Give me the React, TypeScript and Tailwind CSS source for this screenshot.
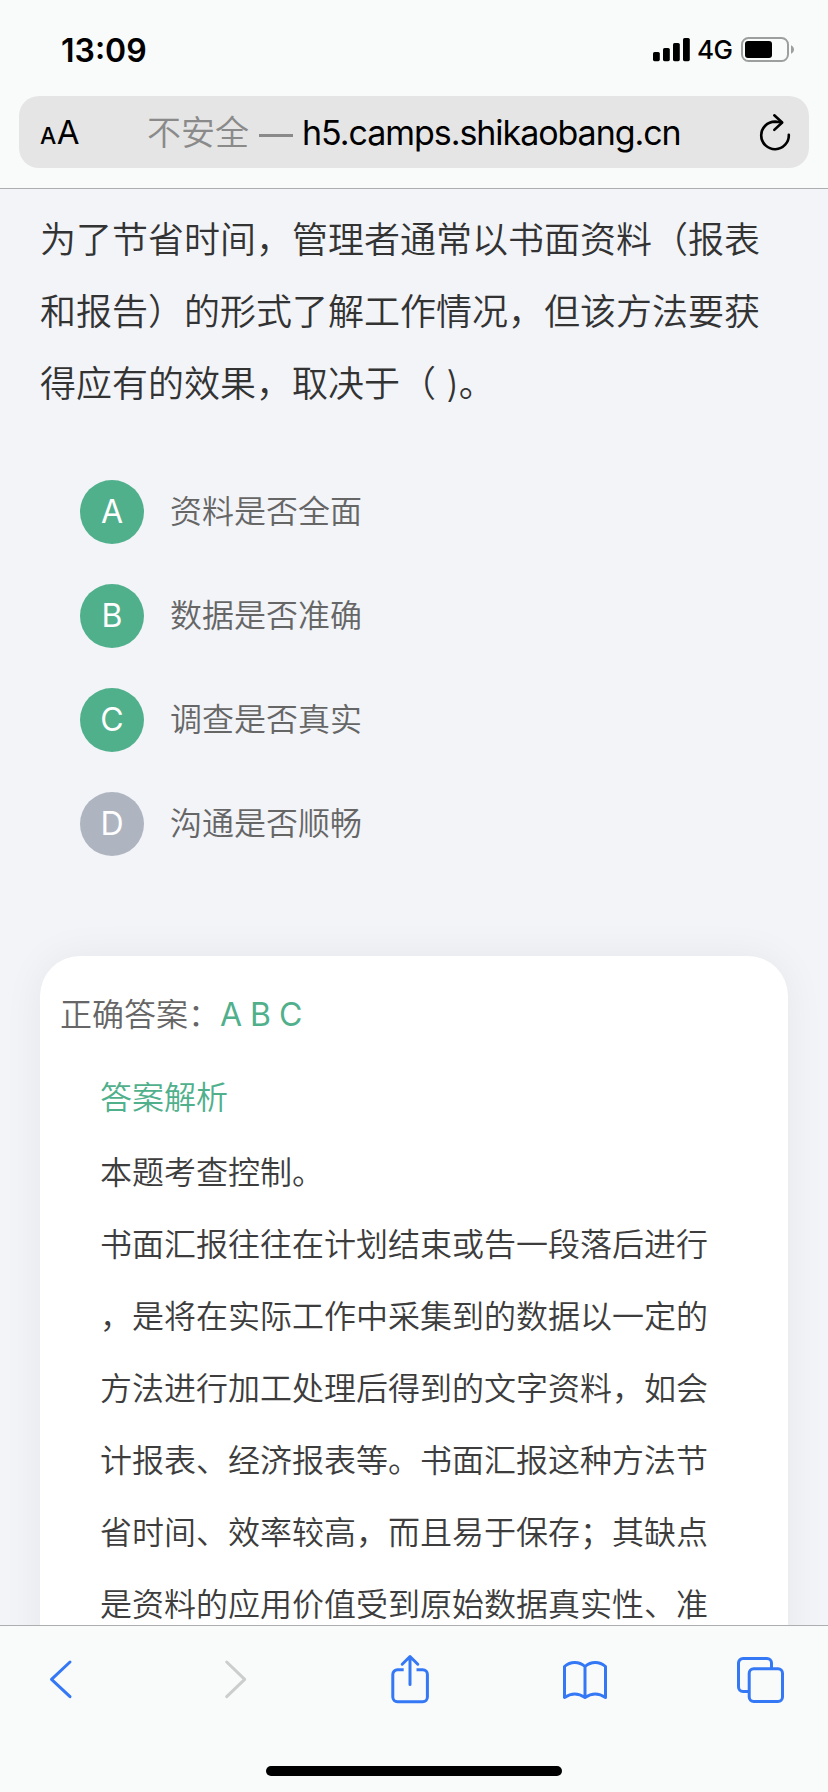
import React from 'react';

interface Option {
  key: string;
  label: string;
  correct: boolean;
}

const questionLines = [
  '为了节省时间，管理者通常以书面资料（报表',
  '和报告）的形式了解工作情况，但该方法要获',
  '得应有的效果，取决于（ )。',
];

const options: Option[] = [
  { key: 'A', label: '资料是否全面', correct: true },
  { key: 'B', label: '数据是否准确', correct: true },
  { key: 'C', label: '调查是否真实', correct: true },
  { key: 'D', label: '沟通是否顺畅', correct: false },
];

const analysisLines = [
  '本题考查控制。',
  '书面汇报往往在计划结束或告一段落后进行',
  '，是将在实际工作中采集到的数据以一定的',
  '方法进行加工处理后得到的文字资料，如会',
  '计报表、经济报表等。书面汇报这种方法节',
  '省时间、效率较高，而且易于保存；其缺点',
  '是资料的应用价值受到原始数据真实性、准',
];

const StatusBar: React.FC = () => (
  <div className="flex h-24 items-start justify-between pl-[61px] pr-[34px] pt-[37px] text-black">
    <span className="text-[32px] font-semibold leading-[27px]">13:09</span>
    <div className="flex items-center">
      <svg width="37" height="25" viewBox="0 0 37 25">
        <rect x="0" y="15" width="6.8" height="9.2" rx="1.6" />
        <rect x="10" y="11" width="6.8" height="13.2" rx="1.6" />
        <rect x="20" y="6" width="6.8" height="18.2" rx="1.6" />
        <rect x="30" y="1" width="6.8" height="23.2" rx="1.6" />
      </svg>
      <span className="ml-[7px] w-[44px] text-[26px] font-[450] leading-[25px] tracking-[-0.5px]">4G</span>
      <svg width="53" height="25" viewBox="0 0 53 25">
        <rect x="1" y="1" width="46" height="23" rx="6.5" fill="none" stroke="#9d9f9e" strokeWidth="2" />
        <rect x="4" y="4" width="27" height="17" rx="3" />
        <path d="M50 8.2c1.9.8 3 2.4 3 4.3s-1.1 3.5-3 4.3z" fill="#9d9f9e" />
      </svg>
    </div>
  </div>
);

const AddressBar: React.FC = () => (
  <div className="mx-[19px] flex h-[72px] items-center rounded-[20px] bg-[#e5e5e5] pl-[21px] pr-[17px] text-black">
    <div className="mt-1 flex w-[107px] items-baseline leading-[76px]">
      <span className="text-[23px] font-medium tracking-[-0.5px]">A</span>
      <span className="ml-px text-[33px]">A</span>
    </div>
    <div className="flex-1 whitespace-pre text-[34px] leading-[75px]">
      <span className="font-[350] text-[#8a8a8a]">不安全</span>
      <span className="ml-[10px] inline-block h-[3px] w-[34px] bg-[#8a8a8a] align-[8px]" />
      <span className="ml-[9px] tracking-[-1.05px]">h5.camps.shikaobang.cn</span>
    </div>
    <svg width="36" height="40" viewBox="0 0 36 40" fill="none" stroke="black" strokeWidth="2.6" strokeLinecap="round" strokeLinejoin="round">
      <path d="M32.8 22.7A13.8 13.8 0 1 1 19 9.6l6.5.7" />
      <path d="M18.3 3.3l7.9 7.2-7.9 7.4" />
    </svg>
  </div>
);

const Toolbar: React.FC = () => (
  <footer className="h-[167px] shrink-0 border-t border-[#acaeaf] bg-[#f9fbfa]">
    <div className="flex justify-between pl-8 pr-10 pt-6 [&_svg]:h-14 [&_svg]:w-14 [&_svg]:fill-none [&_svg]:stroke-[3px]">
      <svg className="stroke-[#3478f6]" viewBox="0 0 56 56" strokeLinecap="round" strokeLinejoin="round">
        <path d="M38 12L19.5 29.4 38 46.7" />
      </svg>
      <svg className="stroke-[#cccdcd]" viewBox="0 0 56 56" strokeLinecap="round" strokeLinejoin="round">
        <path d="M19.7 12l18 17.4-18 17.3" />
      </svg>
      <svg className="stroke-[#3478f6]" viewBox="0 0 56 56" strokeLinejoin="round">
        <path d="M21.7 19.8h-6.2a4.7 4.7 0 0 0-4.7 4.7V47a4.7 4.7 0 0 0 4.7 4.7h25.2a4.7 4.7 0 0 0 4.7-4.7V24.5a4.7 4.7 0 0 0-4.7-4.7h-6.2" />
        <path d="M28 34.5V6.5M20.2 14.2L28 6.5l7.8 7.7" strokeLinecap="round" />
      </svg>
      <svg className="stroke-[#3478f6]" viewBox="0 0 56 56" strokeLinejoin="round">
        <path d="M28 47.5C21.5 43 14 43 7.5 47.5V16.5C13.5 11.2 22 11.2 28 16.5C34 11.2 42.5 11.2 48.5 16.5V47.5C42 43 34.5 43 28 47.5zM28 16.5v31" />
      </svg>
      <svg className="stroke-[#3478f6]" viewBox="0 0 56 56">
        <path d="M39.5 18.8V13a4.5 4.5 0 0 0-4.5-4.5H11A4.5 4.5 0 0 0 6.5 13v24a4.5 4.5 0 0 0 4.5 4.5h6.2" />
        <rect x="17.2" y="18.8" width="33.3" height="32.7" rx="4.5" />
      </svg>
    </div>
    <div className="mx-auto mt-[60px] h-[10px] w-[296px] rounded-full bg-black" />
  </footer>
);

const App: React.FC = () => {
  return (
    <div
      lang="zh-CN"
      className="flex h-[1792px] w-[828px] flex-col overflow-hidden bg-[#f2f4f8] font-[Inter,'Noto_Sans_CJK_SC',sans-serif]"
    >
      <header className="h-[189px] shrink-0 border-b border-[#acaeaf] bg-[#f9fbfa]">
        <StatusBar />
        <AddressBar />
      </header>

      <main className="min-h-0 flex-1 overflow-hidden px-10 pt-[15px]">
        <div className="whitespace-pre text-[36px] font-[350] leading-[72px] text-[#333333]">
          {questionLines.map((line) => (
            <p key={line}>{line}</p>
          ))}
        </div>

        <ul className="mt-[60px] flex flex-col gap-10 pl-10">
          {options.map((option) => (
            <li key={option.key} className="flex items-center">
              <span
                className={`flex h-16 w-16 items-center justify-center rounded-full text-[32px] text-white ${
                  option.correct ? 'bg-[#50b08c]' : 'bg-[#afb5c0]'
                }`}
              >
                {option.key}
              </span>
              <span className="ml-[26px] text-[32px] font-[350] leading-[64px] text-[#666666]">{option.label}</span>
            </li>
          ))}
        </ul>

        <section className="mt-[100px] h-[800px] rounded-[40px] bg-white pl-5 pt-[23px] text-[32px] font-[350] shadow-[0_0_40px_rgba(0,0,0,0.06)]">
          <div className="flex leading-[72px]">
            <span className="text-[#666666]">正确答案：</span>
            <span className="whitespace-pre font-normal tracking-[-0.5px] text-[#50b08c]">A B C</span>
          </div>
          <div className="pl-10">
            <h3 className="mt-[11px] font-[350] leading-[72px] text-[#50b08c]">答案解析</h3>
            <div className="mt-[3px] whitespace-pre leading-[72px] text-[#3d3d3d]">
              {analysisLines.map((line) => (
                <p key={line}>{line}</p>
              ))}
            </div>
          </div>
        </section>
      </main>

      <Toolbar />
    </div>
  );
};

export default App;
